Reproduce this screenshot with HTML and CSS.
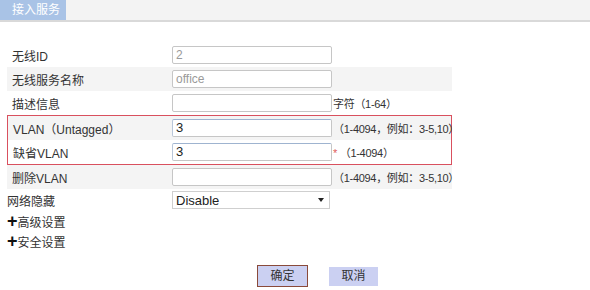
FILE: index.html
```html
<!DOCTYPE html>
<html lang="zh">
<head>
<meta charset="utf-8">
<link rel="stylesheet" href="styles.css">
</head>
<body>
<div class="topbar"><div class="tab">接入服务</div></div>
<div class="form">
  <div class="row">
    <div class="label">无线ID</div>
    <div class="box muted">2</div>
  </div>
  <div class="row alt">
    <div class="label">无线服务名称</div>
    <div class="box muted">office</div>
  </div>
  <div class="row">
    <div class="label">描述信息</div>
    <div class="box"></div>
    <div class="hint">字符（1-64）</div>
  </div>
  <div class="group">
    <div class="row alt">
      <div class="label">VLAN（Untagged）</div>
      <div class="box focus">3</div>
      <div class="hint">（1-4094，例如：3-5,10）</div>
    </div>
    <div class="row">
      <div class="label">缺省VLAN</div>
      <div class="box focus">3</div>
      <div class="hint"><span class="star">*</span> （1-4094）</div>
    </div>
  </div>
  <div class="row alt">
    <div class="label">删除VLAN</div>
    <div class="box"></div>
    <div class="hint">（1-4094，例如：3-5,10）</div>
  </div>
  <div class="row plain">
    <div class="label flush">网络隐藏</div>
    <div class="select"><span>Disable</span><span class="caret"></span></div>
  </div>
  <div class="expander"><span class="plus">+</span>高级设置</div>
  <div class="expander"><span class="plus">+</span>安全设置</div>
</div>
<div class="buttons">
  <div class="btn primary">确定</div>
  <div class="btn">取消</div>
</div>
</body>
</html>
```

FILE: styles.css
```css
* { box-sizing: border-box; }
body {
  margin: 0;
  background: #fff;
  font-family: "Liberation Sans", "Noto Sans CJK SC", sans-serif;
  font-size: 12px;
  color: #333;
}
.topbar {
  height: 22px;
  background: #f3f3f3;
  border-bottom: 2px solid #d9d9d9;
  display: flex;
}
.tab {
  width: 66px;
  height: 20px;
  background: #a9c3e6;
  color: #fff;
  padding-left: 12px;
  line-height: 20px;
  font-size: 12px;
}
.form {
  margin: 21px 0 0 7px;
  width: 445px;
}
.row {
  height: 24px;
  display: flex;
  align-items: center;
}
.row.alt { background: #f4f4f4; }
.row.plain { height: 22px; }
.label {
  flex: 0 0 165px;
  padding-left: 5px;
  white-space: nowrap;
}
.group .label { flex-basis: 164px; }
.label.flush { padding-left: 0; }
.box {
  flex: 0 0 160px;
  height: 18px;
  border: 1px solid #c6c6c6;
  border-radius: 2px;
  background: #fff;
  padding-left: 3px;
  line-height: 16px;
  font-size: 13px;
  color: #222;
}
.box.muted { color: #9a9a9a; font-size: 12px; }
.box.focus { border-top-color: #9fb4d0; border-left-color: #b9c7da; }
.hint {
  padding-left: 1px;
  white-space: nowrap;
  font-size: 11px;
  letter-spacing: -0.3px;
}
.star { color: #e05a5a; }
.group {
  border: 1px solid #d9505e;
  width: 445px;
}
.select {
  flex: 0 0 158px;
  height: 18px;
  border: 1px solid #cfcfcf;
  background: #fff;
  display: flex;
  align-items: center;
  justify-content: space-between;
  padding: 0 5px 0 3px;
  font-size: 13px;
  color: #222;
}
.caret {
  width: 0;
  height: 0;
  border-left: 3px solid transparent;
  border-right: 3px solid transparent;
  border-top: 4px solid #222;
}
.expander {
  height: 20px;
  display: flex;
  align-items: center;
  font-size: 12px;
}
.plus {
  font-size: 18px;
  font-weight: bold;
  color: #111;
  line-height: 1;
}
.buttons {
  display: flex;
  gap: 21px;
  padding-left: 257px;
  margin-top: 14px;
  align-items: center;
}
.btn {
  width: 49px;
  height: 19px;
  background: #cbd0f2;
  text-align: center;
  line-height: 19px;
  font-size: 12px;
  color: #333;
}
.btn.primary {
  width: 51px;
  height: 22px;
  line-height: 20px;
  border: 1px solid #8a4a3a;
}
```
